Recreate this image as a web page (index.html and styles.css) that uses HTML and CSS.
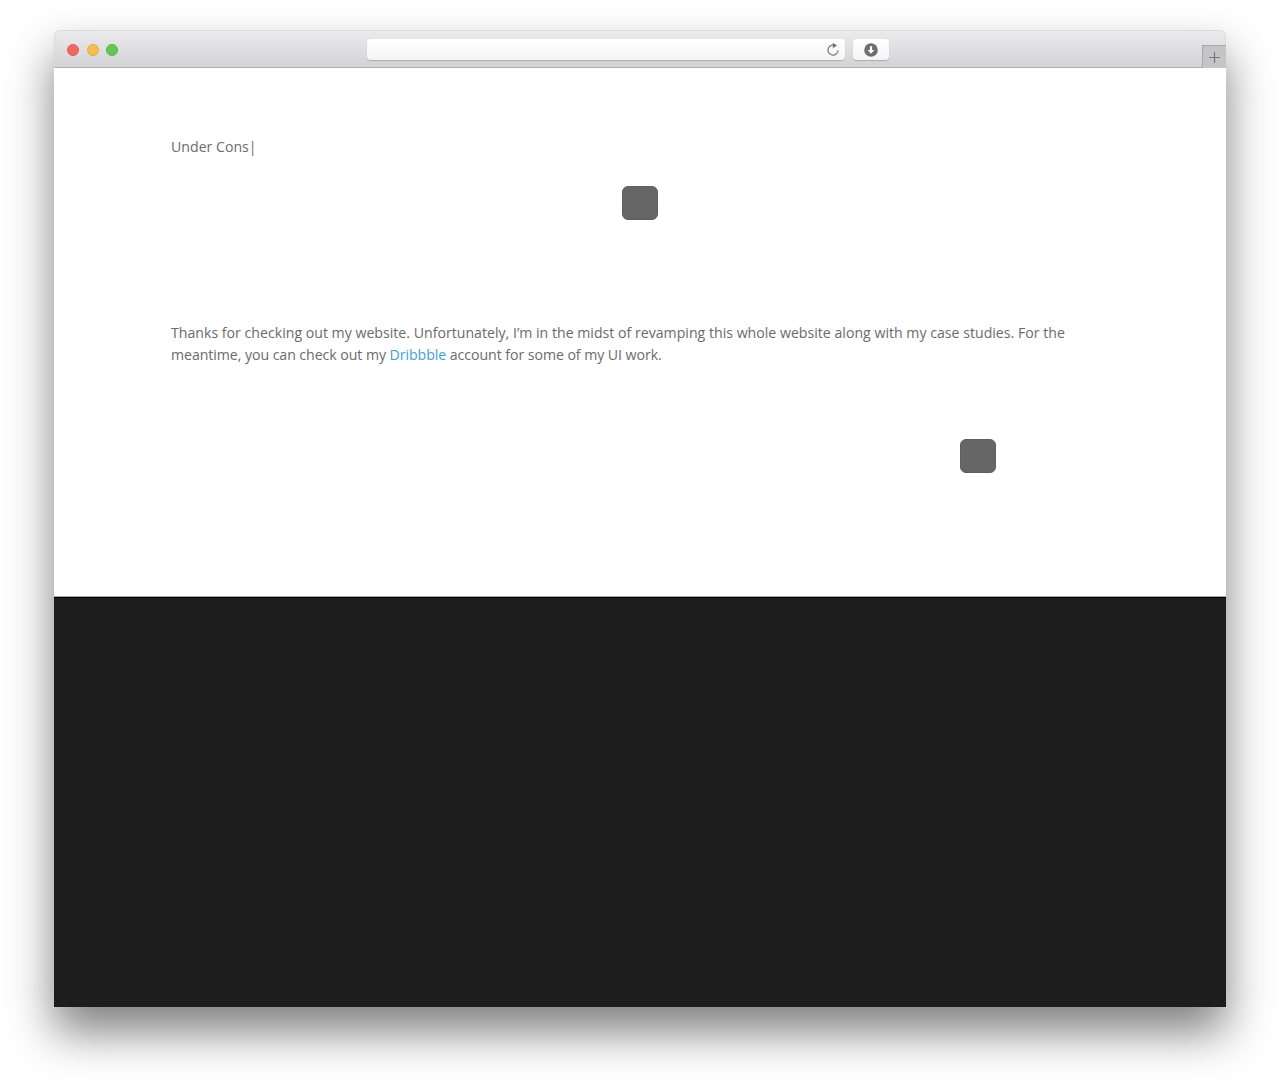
FILE: index.html
```
<!doctype html>
<html>
    <head>
        <meta charset="utf-8">
        <title>Under Construction</title>
        <link rel="stylesheet" href="styles.css">
    </head>
    <body>
        <div class="window">
            <div class="toolbar">
                <div class="lights">
                    <span class="light red"></span>
                    <span class="light yellow"></span>
                    <span class="light green"></span>
                </div>
                <div class="address">
                    <svg width="14" height="15" viewBox="0 0 14 15">
                        <path d="M7.6 3.2A5 5 0 1 0 12 8.2" fill="none" stroke="#777" stroke-width="1.2"/>
                        <path d="M6.8 .8L11.2 3.5L6.8 6.2Z" fill="#777"/>
                    </svg>
                </div>
                <div class="download">
                    <svg width="14" height="14" viewBox="0 0 14 14">
                        <circle cx="7" cy="7" r="6.8" fill="#6e6e6e"/>
                        <path d="M5.9 3.2h2.2v3.9h2.3L7 10.7L3.6 7.1h2.3z" fill="#fff"/>
                    </svg>
                </div>
                <div class="new-tab">
                    <svg width="11" height="11" viewBox="0 0 11 11">
                        <path d="M5.5 0v11M0 5.5h11" stroke="#777" stroke-width="1.2"/>
                    </svg>
                </div>
            </div>
            <div class="page">
                <p class="typed">Under Cons|</p>
                <div class="box"></div>
                <p class="intro">Thanks for checking out my website. Unfortunately, I’m in the midst of revamping this whole website along with my case studies. For the<br><span class="tight">meantime, you can check out my <a href="#">Dribbble</a> account for some of my UI work.</span></p>
                <div class="box right"></div>
            </div>
            <div class="footer"></div>
        </div>
    </body>
</html>
```

FILE: styles.css
```
* {
    box-sizing: border-box;
}

body {
    margin: 0;
    height: 1084px;
    padding: 30px 54px 0;
    overflow: hidden;
    background: #fff;
    font-family: "Open Sans", sans-serif;
    color: #6b6b6b;
}

.window {
    height: 977px;
    border-radius: 6px 6px 0 0;
    background: #fff;
    box-shadow: 0 25px 46px rgba(0,0,0,.5);
}

.toolbar {
    display: flex;
    height: 38px;
    border: 1px solid #dadadc;
    border-bottom-color: #acacae;
    border-radius: 6px 6px 0 0;
    background: linear-gradient(#ebebed, #d3d3d5);
}

.lights {
    display: flex;
    gap: 7.5px;
    width: 312px;
    padding: 13px 0 0 12px;
}

.light {
    width: 12px;
    height: 12px;
    border-radius: 50%;
}

.red {
    background: #ed6a5f;
    border: 1px solid #df5e55;
}

.yellow {
    background: #f5bf4f;
    border: 1px solid #dfae48;
}

.green {
    background: #62c654;
    border: 1px solid #57b54a;
}

.address,
.download {
    height: 21px;
    margin-top: 8px;
    border-radius: 4px;
    background: linear-gradient(#fff, #f5f5f5);
    box-shadow: 0 1px 1px rgba(0,0,0,.2);
}

.address {
    display: flex;
    justify-content: flex-end;
    width: 478px;
    padding: 3px 5px 0 0;
}

.download {
    display: flex;
    justify-content: center;
    width: 36px;
    margin-left: 8px;
    padding-top: 4px;
}

.new-tab {
    display: flex;
    align-items: center;
    justify-content: center;
    width: 24px;
    height: 23px;
    margin: 14px -1px 0 auto;
    border: 1px solid #a9a9ab;
    border-width: 1px 0 0 1px;
    background: #c5c5c7;
}

.page {
    height: 529px;
    padding: 68px 117px 0;
    border-bottom: 1px solid #aaa;
    font-size: 14.15px;
    line-height: 22px;
}

p {
    margin: 0;
    white-space: nowrap;
}

a {
    color: #3ea0d8;
    text-decoration: none;
}

.box {
    width: 36px;
    height: 34px;
    margin: 28px auto 0;
    border: 1px solid #5f5f5f;
    border-radius: 6px;
    background: #666;
}

.intro {
    margin-top: 102px;
}

.tight {
    letter-spacing: -.06px;
}

.right {
    margin: 73px 113px 0 auto;
}

.footer {
    height: 410px;
    border-top: 1px solid #000;
    background: #1d1d1d;
}
```
